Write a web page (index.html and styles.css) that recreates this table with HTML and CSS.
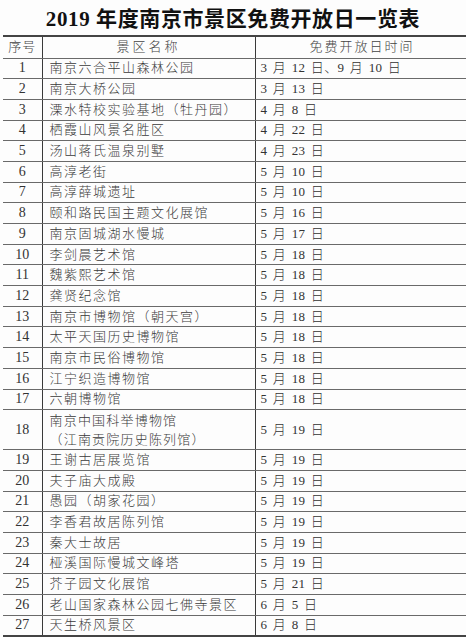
FILE: index.html
```html
<!DOCTYPE html>
<html lang="zh">
<head>
<meta charset="utf-8">
<title>2019年度南京市景区免费开放日一览表</title>
<link rel="stylesheet" href="styles.css">
</head>
<body>
<div class="page">
  <h1 class="title"><span class="num">2019</span> 年度南京市景区免费开放日一览表</h1>
  <table class="list">
    <colgroup><col class="c-no"><col class="c-name"><col class="c-date"></colgroup>
    <thead>
      <tr class="head"><th>序号</th><th class="h-name">景区名称</th><th class="h-date">免费开放日时间</th></tr>
    </thead>
    <tbody>
      <tr><td class="no">1</td><td class="name">南京六合平山森林公园</td><td class="date">3 月 12 日、9 月 10 日</td></tr>
      <tr><td class="no">2</td><td class="name">南京大桥公园</td><td class="date">3 月 13 日</td></tr>
      <tr><td class="no">3</td><td class="name">溧水特校实验基地（牡丹园）</td><td class="date">4 月 8 日</td></tr>
      <tr><td class="no">4</td><td class="name">栖霞山风景名胜区</td><td class="date">4 月 22 日</td></tr>
      <tr><td class="no">5</td><td class="name">汤山蒋氏温泉别墅</td><td class="date">4 月 23 日</td></tr>
      <tr><td class="no">6</td><td class="name">高淳老街</td><td class="date">5 月 10 日</td></tr>
      <tr><td class="no">7</td><td class="name">高淳薛城遗址</td><td class="date">5 月 10 日</td></tr>
      <tr><td class="no">8</td><td class="name">颐和路民国主题文化展馆</td><td class="date">5 月 16 日</td></tr>
      <tr><td class="no">9</td><td class="name">南京固城湖水慢城</td><td class="date">5 月 17 日</td></tr>
      <tr><td class="no">10</td><td class="name">李剑晨艺术馆</td><td class="date">5 月 18 日</td></tr>
      <tr><td class="no">11</td><td class="name">魏紫熙艺术馆</td><td class="date">5 月 18 日</td></tr>
      <tr><td class="no">12</td><td class="name">龚贤纪念馆</td><td class="date">5 月 18 日</td></tr>
      <tr><td class="no">13</td><td class="name">南京市博物馆（朝天宫）</td><td class="date">5 月 18 日</td></tr>
      <tr><td class="no">14</td><td class="name">太平天国历史博物馆</td><td class="date">5 月 18 日</td></tr>
      <tr><td class="no">15</td><td class="name">南京市民俗博物馆</td><td class="date">5 月 18 日</td></tr>
      <tr><td class="no">16</td><td class="name">江宁织造博物馆</td><td class="date">5 月 18 日</td></tr>
      <tr><td class="no">17</td><td class="name">六朝博物馆</td><td class="date">5 月 18 日</td></tr>
      <tr class="double"><td class="no">18</td><td class="name">南京中国科举博物馆<br>（江南贡院历史陈列馆）</td><td class="date">5 月 19 日</td></tr>
      <tr><td class="no">19</td><td class="name">王谢古居展览馆</td><td class="date">5 月 19 日</td></tr>
      <tr><td class="no">20</td><td class="name">夫子庙大成殿</td><td class="date">5 月 19 日</td></tr>
      <tr><td class="no">21</td><td class="name">愚园（胡家花园）</td><td class="date">5 月 19 日</td></tr>
      <tr><td class="no">22</td><td class="name">李香君故居陈列馆</td><td class="date">5 月 19 日</td></tr>
      <tr><td class="no">23</td><td class="name">秦大士故居</td><td class="date">5 月 19 日</td></tr>
      <tr><td class="no">24</td><td class="name">桠溪国际慢城文峰塔</td><td class="date">5 月 19 日</td></tr>
      <tr><td class="no">25</td><td class="name">芥子园文化展馆</td><td class="date">5 月 21 日</td></tr>
      <tr><td class="no">26</td><td class="name">老山国家森林公园七佛寺景区</td><td class="date">6 月 5 日</td></tr>
      <tr><td class="no">27</td><td class="name">天生桥风景区</td><td class="date">6 月 8 日</td></tr>
    </tbody>
  </table>
</div>
</body>
</html>
```
FILE: styles.css
```css
html, body {
  margin: 0;
  padding: 0;
  overflow: hidden;
  background: #fdfdfd;
}

.page {
  width: 466px;
  height: 637px;
  overflow: hidden;
  color: #2e2e2e;
  font-family: "Liberation Serif", "Noto Sans CJK SC", serif;
}

.title {
  margin: 0;
  height: 35px;
  line-height: 38px;
  text-align: center;
  font-size: 21px;
  font-weight: 700;
  color: #111;
  letter-spacing: 0.6px;
  white-space: nowrap;
}

.title .num {
  font-family: "Liberation Serif", serif;
  font-weight: 700;
}

.list {
  margin-left: 3px;
  width: 466px;
  table-layout: fixed;
  border-collapse: collapse;
  font-size: 13px;
}

.c-no { width: 39px; }
.c-name { width: 213px; }
.c-date { width: 214px; }

.list th,
.list td {
  padding: 0;
  border-top: 1px solid #6a6a6a;
  border-bottom: 1px solid #6a6a6a;
  border-left: 1px solid #3a3a3a;
  border-right: 1px solid #3a3a3a;
  white-space: nowrap;
  line-height: 16px;
}

.list td:first-child,
.list th:first-child {
  border-left: none;
}

.list thead tr th {
  border-top: 2px solid #444;
}

.list tbody tr:last-child td {
  border-bottom: 2px solid #444;
}

.head {
  height: 22px;
}

.head th {
  font-weight: 300;
  color: #444;
  font-size: 13px;
  letter-spacing: 1px;
  text-align: center;
}

.head .h-name {
  letter-spacing: 3px;
}

.head .h-date {
  letter-spacing: 2px;
}

.list tbody tr {
  height: 20.7px;
}

.list tbody tr.double {
  height: 40px;
}

.no {
  text-align: center;
  font-size: 14px;
  color: #333;
}

.name {
  padding-left: 7px !important;
  font-weight: 300;
  letter-spacing: 1.5px;
  color: #3a3a3a;
}

.double .name {
  line-height: 19px;
  letter-spacing: 1.2px;
}

.date {
  padding-left: 5px !important;
  font-size: 13px;
  font-weight: 300;
  letter-spacing: 0.3px;
  word-spacing: 2px;
  color: #333;
}
```
